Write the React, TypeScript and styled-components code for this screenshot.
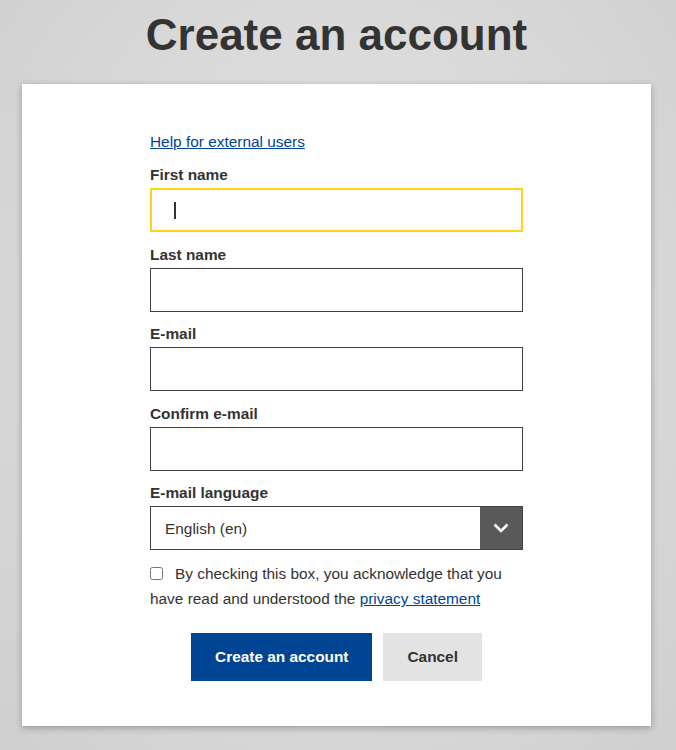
import React from 'react';
import styled, { createGlobalStyle } from 'styled-components';

const GlobalStyle = createGlobalStyle`
  html, body {
    margin: 0;
    padding: 0;
    min-height: 100%;
  }
  body {
    font-family: "Liberation Sans", Arial, sans-serif;
    color: #333;
    background: radial-gradient(ellipse at 50% 45%, #e6e6e6 0%, #dcdcdc 45%, #cfcfcf 100%);
    min-height: 750px;
  }
`;

const Page = styled.div`
  display: flex;
  flex-direction: column;
  align-items: center;
  padding: 9px 3px 24px 0;
`;

const Title = styled.h1`
  margin: 0 0 22px;
  font-size: 44px;
  line-height: 1.2;
  font-weight: 700;
  color: #333;
`;

const Card = styled.div`
  width: 629px;
  box-sizing: border-box;
  background: #fff;
  box-shadow: 0 2px 7px rgba(0, 0, 0, 0.28);
  padding: 46px 0 45px;
  display: flex;
  justify-content: center;
`;

const Form = styled.form`
  width: 373px;
  font-size: 15.4px;
  line-height: 23px;
`;

const Link = styled.a`
  color: #004494;
  text-decoration: underline;
  cursor: pointer;
`;

const Field = styled.div`
  margin-top: 10.5px;
  display: flex;
  flex-direction: column;
`;

const Label = styled.label`
  font-weight: 700;
  color: #333;
  margin-bottom: 2px;
`;

const Input = styled.input`
  box-sizing: border-box;
  height: 44px;
  width: 100%;
  margin: 0;
  padding: 0 14px;
  font: inherit;
  color: #333;
  background: #fff;
  border: 1px solid #404040;
  border-radius: 0;
  outline: none;
`;

const Caret = styled.span`
  display: inline-block;
  width: 2px;
  height: 17px;
  background: #333;
  margin-left: 22px;
`;

const FocusBox = styled.div`
  box-sizing: border-box;
  height: 44px;
  border: 2px solid #ffd617;
  display: flex;
  align-items: center;
`;

const Select = styled.div`
  box-sizing: border-box;
  height: 44px;
  border: 1px solid #404040;
  display: flex;
  align-items: stretch;
  background: #fff;
`;

const SelectValue = styled.div`
  flex: 1;
  display: flex;
  align-items: center;
  padding-left: 14px;
  color: #333;
`;

const SelectArrow = styled.div`
  width: 42px;
  background: #595959;
  display: flex;
  align-items: center;
  justify-content: center;
`;

const Consent = styled.p`
  margin: 11px 0 0;
  line-height: 25px;
  color: #333;
`;

const Checkbox = styled.input`
  width: 13px;
  height: 13px;
  margin: 0 12px 0 0;
  vertical-align: -1px;
`;

const Actions = styled.div`
  margin-top: 22px;
  display: flex;
  justify-content: center;
  gap: 11px;
`;

const Button = styled.button<{ $primary?: boolean }>`
  height: 48px;
  padding: 0 24px;
  border: none;
  border-radius: 0;
  font-family: inherit;
  font-size: 15.4px;
  font-weight: 700;
  cursor: pointer;
  background: ${({ $primary }) => ($primary ? '#004494' : '#e3e3e3')};
  color: ${({ $primary }) => ($primary ? '#fff' : '#333')};
`;

const fields = ['Last name', 'E-mail', 'Confirm e-mail'];

export default function App() {
  return (
    <>
      <GlobalStyle />
      <Page>
        <Title>Create an account</Title>
        <Card>
          <Form onSubmit={(e) => e.preventDefault()}>
            <Link>Help for external users</Link>
            <Field>
              <Label>First name</Label>
              <FocusBox>
                <Caret />
              </FocusBox>
            </Field>
            {fields.map((f) => (
              <Field key={f}>
                <Label>{f}</Label>
                <Input type="text" />
              </Field>
            ))}
            <Field>
              <Label>E-mail language</Label>
              <Select>
                <SelectValue>English (en)</SelectValue>
                <SelectArrow>
                  <svg width="16" height="10" viewBox="0 0 16 10" fill="none">
                    <path d="M1.5 1.5 L8 8 L14.5 1.5" stroke="#fff" strokeWidth="2.6" />
                  </svg>
                </SelectArrow>
              </Select>
            </Field>
            <Consent>
              <Checkbox type="checkbox" />
              By checking this box, you acknowledge that you have read and understood the{' '}
              <Link>privacy statement</Link>
            </Consent>
            <Actions>
              <Button $primary type="submit">
                Create an account
              </Button>
              <Button type="button">Cancel</Button>
            </Actions>
          </Form>
        </Card>
      </Page>
    </>
  );
}
